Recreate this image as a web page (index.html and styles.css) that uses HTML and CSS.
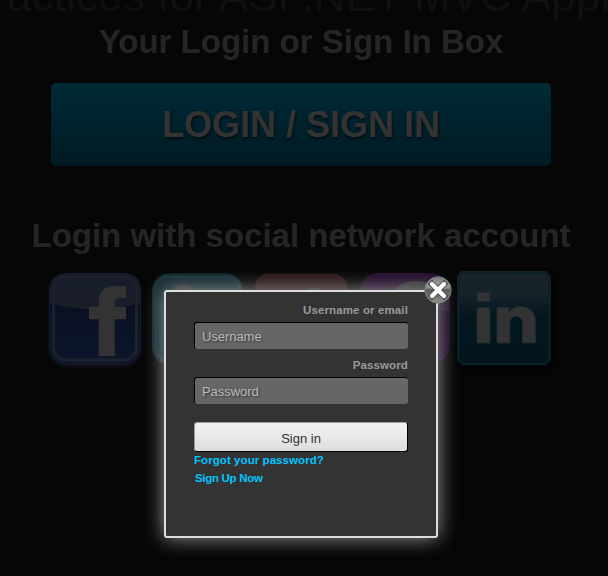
FILE: index.html
```html
<!DOCTYPE html>
<html lang="en">
<head>
<meta charset="utf-8">
<title>Login</title>
<link rel="stylesheet" href="styles.css">
</head>
<body>
<main class="page">
  <div class="banner"><span>actices for ASP.NET MVC Appl</span></div>
  <h1 class="heading heading-top"><span>Your Login or Sign In Box</span></h1>
  <a class="login-button"><span>LOGIN / SIGN IN</span></a>
  <h2 class="heading heading-social"><span>Login with social network account</span></h2>
  <div class="socials">
    <svg class="social" viewBox="0 0 102 102">
      <defs>
        <linearGradient id="fb" x1="0" y1="0" x2="0" y2="1"><stop offset="0" stop-color="#080d1b"/><stop offset="1" stop-color="#0d162d"/></linearGradient>
        <linearGradient id="fbGloss" x1="0" y1="0" x2="0" y2="1"><stop offset="0" stop-color="#151b29"/><stop offset="1" stop-color="#1a1f29"/></linearGradient>
      </defs>
      <rect class="soft" x="5" y="7" width="90" height="91" rx="17" fill="#151a26"/>
      <rect x="4.500" y="5.500" width="91" height="90" rx="16" fill="url(#fb)" stroke="#141c30"/>
      <path d="M5 35V21Q5 6 21 6H80Q95 6 95 21V35Q50 47 5 35Z" fill="url(#fbGloss)"/>
      <rect x="8.500" y="9" width="83" height="83" rx="13" fill="none" stroke="#1c212c" stroke-width="3"/>
      <path d="M53.700 88V51.300H44V39h9.700V35C53.700 23 60 18 70 18H81V30H75C71 30 69.700 32 69.700 35v4H81V51.300H69.700V88Z" fill="#333"/>
    </svg>
    <svg class="social" viewBox="0 0 102 102">
      <defs><linearGradient id="tw" x1="0" y1="0" x2="0" y2="1"><stop offset="0" stop-color="#142a31"/><stop offset="1" stop-color="#0b2630"/></linearGradient></defs>
      <rect x="5.500" y="6" width="90" height="90" rx="16" fill="url(#tw)" stroke="#102b33"/>
      <rect x="8.500" y="9" width="84" height="84" rx="13" fill="none" stroke="#1c333a" stroke-width="2"/>
      <circle cx="37" cy="29" r="13" fill="#2f3033"/>
    </svg>
    <svg class="social social-google" viewBox="0 0 102 102">
      <defs><linearGradient id="gp" x1="0" y1="0" x2="0" y2="1"><stop offset="0" stop-color="#2c1719"/><stop offset="1" stop-color="#260b0d"/></linearGradient></defs>
      <rect x="5" y="5.500" width="92" height="91" rx="14" fill="url(#gp)"/>
      <circle cx="64" cy="33" r="13" fill="#333"/>
    </svg>
    <svg class="social social-yahoo" viewBox="0 0 102 102">
      <defs><linearGradient id="ya" x1="0" y1="0" x2="0" y2="1"><stop offset="0" stop-color="#230b2d"/><stop offset=".4" stop-color="#29152f"/><stop offset=".42" stop-color="#1b0723"/><stop offset="1" stop-color="#220a2b"/></linearGradient></defs>
      <rect x="5" y="5" width="91" height="91" rx="20" fill="url(#ya)"/>
      <ellipse cx="62" cy="31" rx="25" ry="18" fill="#333"/>
    </svg>
    <svg class="social" viewBox="0 0 102 102">
      <defs><linearGradient id="li" x1="0" y1="0" x2="0" y2="1"><stop offset="0" stop-color="#1a2428"/><stop offset=".25" stop-color="#142229"/><stop offset=".5" stop-color="#04161e"/><stop offset="1" stop-color="#02151e"/></linearGradient></defs>
      <path class="soft" d="M5 8L9 4H94L99 9V95L94 100H9L5 95Z" fill="#000"/>
      <path d="M4 8L8.500 3H93L98 8V92L93 97.500H9L4 92Z" fill="url(#li)"/>
      <path d="M5.500 9L9.500 4.500H92L96.500 9V91.500L92 96H10L5.500 91.500Z" fill="none" stroke="#0b2029" stroke-width="2"/>
      <g fill="#333" stroke="#1c2a2f"><rect x="24" y="24.500" width="13" height="9"/><rect x="24" y="39.500" width="13" height="35.500"/>
      <path d="M44 39.500H56V44C58.500 40.500 62 38.500 67 38.500C77 38.500 82.500 44 82.500 54V75H69.500V56C69.500 51 67 48.500 63.500 48.500C59.500 48.500 57 51 57 56V75H44Z"/></g>
    </svg>
  </div>
</main>

<div class="popup">
  <form class="form">
    <label class="label" for="u">Username or email</label>
    <input class="field" id="u" type="text" placeholder="Username">
    <label class="label" for="p">Password</label>
    <input class="field" id="p" type="password" placeholder="Password">
    <button class="submit" type="button">Sign in</button>
    <a class="link forgot">Forgot your password?</a>
    <a class="link signup">Sign Up Now</a>
  </form>
  <svg class="close" viewBox="0 0 28 28">
    <defs><linearGradient id="cl" x1="0" y1="0" x2="0" y2="1"><stop offset="0" stop-color="#777977"/><stop offset=".25" stop-color="#969896"/><stop offset=".42" stop-color="#8c8f8c"/><stop offset=".5" stop-color="#565956"/><stop offset="1" stop-color="#8f938f"/></linearGradient></defs>
    <circle cx="14" cy="14" r="13.200" fill="url(#cl)" stroke="#777b77" stroke-width="1"/>
    <path d="M8 8L20 20M20 8L8 20" stroke="#454745" stroke-width="6" stroke-linecap="square"/>
    <path d="M8 8L20 20M20 8L8 20" stroke="#fff" stroke-width="4.400" stroke-linecap="round"/>
  </svg>
</div>
</body>
</html>
```
FILE: styles.css
```css
* { box-sizing: border-box; }
body {
  margin: 0;
  width: 608px;
  height: 576px;
  overflow: hidden;
  background: #060606;
  font-family: "Liberation Sans", Arial, sans-serif;
}
.page {
  display: flex;
  flex-direction: column;
  height: 576px;
  overflow: hidden;
}
.banner {
  height: 20px;
  padding: 0 0 3px 7px;
  display: flex;
  align-items: flex-end;
  white-space: nowrap;
  font-size: 44px;
  line-height: 42px;
  letter-spacing: .12px;
  color: #0e1012;
}
.heading {
  margin: 0;
  padding-right: 6px;
  text-align: center;
  white-space: nowrap;
  font-weight: bold;
  font-size: 33px;
  line-height: 42px;
  color: #252525;
}
.heading-top { margin-top: 1px; }
.login-button {
  display: flex;
  align-items: center;
  justify-content: center;
  width: 500px;
  height: 83px;
  margin: 20px 0 0 51px;
  border-radius: 5px;
  background: linear-gradient(#002a36, #001a22);
  color: #333;
  font-size: 36px;
  font-weight: bold;
  white-space: nowrap;
  text-shadow: 1px 2px 3px rgba(0, 0, 0, .6);
}
.heading-social { margin-top: 49px; }
.socials {
  display: flex;
  margin: 11px 0 0 45px;
}
.social {
  flex: none;
  width: 102px;
  height: 102px;
}
.social-google { margin: 0 1px 0 1px; }
.social-yahoo { margin: 0 -3px 0 1px; }
.soft { filter: blur(2px); }
.popup {
  position: absolute;
  left: 164px;
  top: 290px;
  width: 274px;
  height: 248px;
  border: 2px solid #ddd;
  border-radius: 3px;
  background: #333;
  box-shadow: 0 0 20px #999;
}
.form {
  display: flex;
  flex-direction: column;
  padding: 10px 28px 0;
}
.label, .link {
  font-size: 11.5px;
  font-weight: bold;
  letter-spacing: .12px;
  line-height: 16px;
  white-space: nowrap;
}
.label {
  text-align: right;
  color: #999;
  margin-bottom: 4px;
}
.field {
  width: 214px;
  height: 27px;
  margin: 0 0 8px;
  padding: 1px 7px 0;
  border: solid #000;
  border-width: 1px 0 0 1px;
  border-radius: 3px;
  background: #666;
  font: 13px "Liberation Sans", Arial, sans-serif;
  letter-spacing: -.05px;
}
.field::placeholder {
  color: #bbb;
  opacity: 1;
  text-shadow: 1px 1px 2px #333;
}
.submit {
  width: 214px;
  height: 30px;
  margin: 10px 0 0;
  padding: 3px 0 0;
  border: 1px solid;
  border-color: #999 #000 #000 #999;
  border-radius: 3px;
  background: linear-gradient(#f3f3f3, #ddd);
  color: #333;
  font: 13px "Liberation Sans", Arial, sans-serif;
}
.link { color: #00c6ff; }
.forgot { letter-spacing: .07px; }
.signup {
  margin: 2px 0 0 1px;
  letter-spacing: -.3px;
}
.close {
  position: absolute;
  right: -16px;
  top: -16px;
  width: 28px;
  height: 28px;
}
```
